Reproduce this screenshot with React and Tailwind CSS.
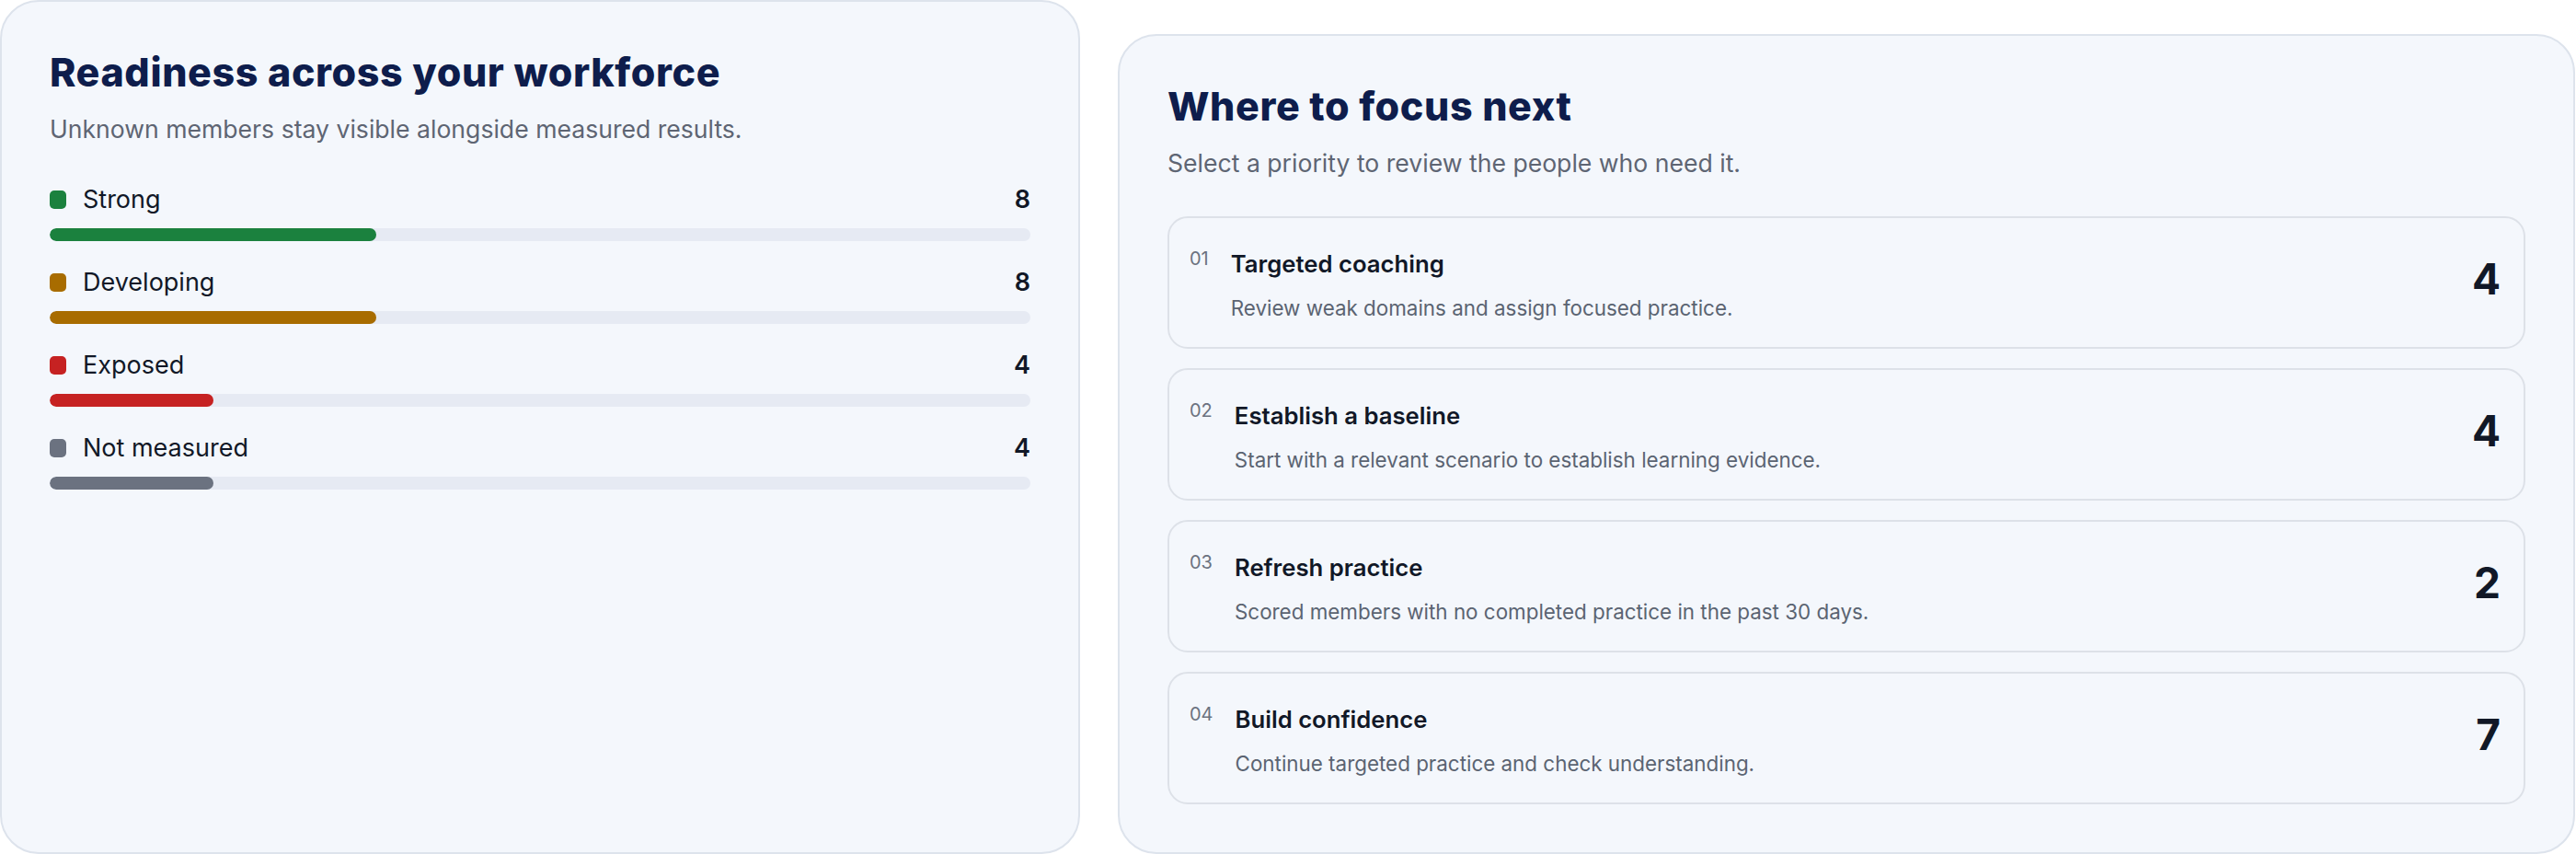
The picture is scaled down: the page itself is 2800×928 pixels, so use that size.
const readiness = [
  { label: 'Strong', count: 8, color: 'bg-[#1b813e]' },
  { label: 'Developing', count: 8, color: 'bg-[#a86c00]' },
  { label: 'Exposed', count: 4, color: 'bg-[#c62222]' },
  { label: 'Not measured', count: 4, color: 'bg-[#6b7280]' },
];

const priorities = [
  { id: '01', title: 'Targeted coaching', body: 'Review weak domains and assign focused practice.', count: 4 },
  { id: '02', title: 'Establish a baseline', body: 'Start with a relevant scenario to establish learning evidence.', count: 4 },
  { id: '03', title: 'Refresh practice', body: 'Scored members with no completed practice in the past 30 days.', count: 2 },
  { id: '04', title: 'Build confidence', body: 'Continue targeted practice and check understanding.', count: 7 },
];

const total = readiness.reduce((sum, r) => sum + r.count, 0);

function CardHeader({ title, subtitle }) {
  return (
    <div>
      <h2 className="text-[43px] leading-[52px] font-extrabold tracking-[0.6px] text-[#0e1d4c]">{title}</h2>
      <p className="mt-[17px] text-[26.6px] leading-[39px] text-[#5e6573]">{subtitle}</p>
    </div>
  );
}

export default function App() {
  return (
    <div className="w-[2800px] h-[928px] bg-white flex items-start gap-[41px] font-['Inter',sans-serif]">
      {/* Readiness breakdown */}
      <section className="w-[1174px] h-[928px] shrink-0 rounded-[42px] border-2 border-[#dde3ec] bg-[#f4f7fc] px-[52px] pt-[50px]">
        <CardHeader
          title="Readiness across your workforce"
          subtitle="Unknown members stay visible alongside measured results."
        />
        <div className="mt-[36px] flex flex-col gap-[24px]">
          {readiness.map((r) => (
            <div key={r.label}>
              <div className="flex items-center justify-between h-[42px]">
                <div className="flex items-center gap-[18px]">
                  <span className={`w-[18px] h-[20px] rounded-[5px] ${r.color}`} />
                  <span className="text-[27px] text-[#111827]">{r.label}</span>
                </div>
                <span className="text-[27px] font-semibold text-[#111827]">{r.count}</span>
              </div>
              <div className="mt-[10px] h-[14px] rounded-full bg-[#e6eaf3] overflow-hidden">
                <div className={`h-full rounded-full ${r.color}`} style={{ width: `${(r.count / total) * 100}%` }} />
              </div>
            </div>
          ))}
        </div>
      </section>

      {/* Priority list */}
      <section className="w-[1584px] mt-[37px] h-[891px] rounded-[42px] border-2 border-[#dde3ec] bg-[#f4f7fc] px-[52px] pt-[50px]">
        <CardHeader
          title="Where to focus next"
          subtitle="Select a priority to review the people who need it."
        />
        <div className="mt-[38px] flex flex-col gap-[21px]">
          {priorities.map((p) => (
            <button
              key={p.id}
              className="h-[144px] w-full flex items-center justify-between rounded-[22px] border-2 border-[#dde1e8] bg-[#f4f7fc] pl-[22px] pr-[25px] text-left"
            >
              <div className="flex items-start gap-[24px] self-start pt-[30px]">
                <span className="text-[20px] leading-[28px] text-[#6b7280]">{p.id}</span>
                <div className="mt-[2px]">
                  <div className="text-[25.7px] leading-[36px] font-semibold text-[#111827]">{p.title}</div>
                  <div className="mt-[13px] text-[22.4px] leading-[33px] text-[#5b6472]">{p.body}</div>
                </div>
              </div>
              <span className="mb-[8px] text-[46px] leading-none font-bold text-[#111827]">{p.count}</span>
            </button>
          ))}
        </div>
      </section>
    </div>
  );
}
